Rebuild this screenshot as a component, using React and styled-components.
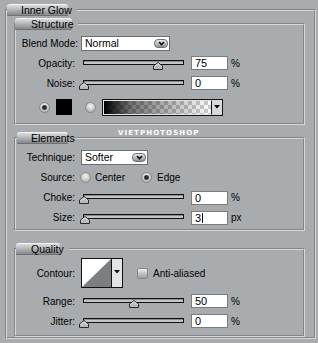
import React from 'react';
import styled, { createGlobalStyle, css } from 'styled-components';

const GlobalStyle = createGlobalStyle`
  html, body {
    margin: 0;
    padding: 0;
    background: #a9acaf;
  }
  body {
    font-family: "Liberation Sans", Arial, sans-serif;
    font-size: 10px;
    color: #000;
  }
`;

const Page = styled.div`
  position: relative;
  width: 318px;
  height: 343px;
  box-sizing: border-box;
  padding: 4px 2px 0 5px;
  overflow: hidden;
`;

// etched frame with a tab for its title
const Group = styled.fieldset`
  margin: ${p => (p.$inner ? `${p.$top}px 9px 0 7px` : '0')};
  padding: 0 0 ${p => p.$pb || 0}px 0;
  border: 2px groove #d6d8da;
  min-width: 0;
`;

const Legend = styled.legend`
  padding: 0 ${p => p.$gap}px 0 0;
  margin-left: ${p => p.$off || 0}px;
`;

const Tab = styled.div`
  width: ${p => p.$w}px;
  height: 12px;
  box-sizing: border-box;
  padding-left: ${p => p.$pad}px;
  line-height: 11px;
  white-space: nowrap;
  border-radius: 3px 3px 1px 1px;
  border-top: 1px solid #f2f3f4;
  border-bottom: 1px solid #6e7174;
  background: linear-gradient(#dadcdd 0%, #bfc1c3 35%, #9ea1a4 70%, #86898c 100%);
  font-size: 10.5px;
`;

const Body = styled.div`
  display: flex;
  flex-direction: column;
  padding-top: ${p => p.$pt || 0}px;
`;

const Row = styled.div`
  display: flex;
  align-items: center;
  height: ${p => p.$h || 20}px;
  padding-left: ${p => p.$pl || 0}px;
`;

const Label = styled.span`
  flex: none;
  width: ${p => p.$w || 59}px;
  margin-right: ${p => p.$mr || 6}px;
  text-align: right;
  white-space: nowrap;
`;

const Select = styled.div`
  display: flex;
  align-items: center;
  justify-content: space-between;
  width: ${p => p.$w}px;
  height: 15px;
  box-sizing: border-box;
  padding: 0 1px 0 3px;
  background: #fff;
  border: 1px solid #6c6f72;
  font-size: 10.5px;
`;

const DropBtn = styled.span`
  display: flex;
  align-items: center;
  justify-content: center;
  width: 14px;
  height: 9px;
  box-sizing: border-box;
  border: 1px solid #6f7275;
  border-radius: 4px;
  background: linear-gradient(#eceded, #b3b6b8 60%, #8e9194);
`;

const SliderBox = styled.div`
  position: relative;
  flex: none;
  width: 101px;
  height: 13px;
  margin: 0 7px 0 2px;
`;

const Track = styled.div`
  margin-top: 3px;
  height: 5px;
  box-sizing: border-box;
  border: 1px solid #111;
  background: #c3c5c7;
  box-shadow: inset 0 1px 0 #8a8c8e;
`;

const Thumb = styled.svg`
  position: absolute;
  top: 5px;
  margin-left: -5px;
`;

const NumBox = styled.div`
  flex: none;
  width: 37px;
  height: 14px;
  box-sizing: border-box;
  padding-left: 3px;
  line-height: 12px;
  background: #fff;
  border: 1px solid #7a7d80;
  font-size: 11px;
`;

const Caret = styled.span`
  display: inline-block;
  width: 1px;
  height: 10px;
  margin-left: 1px;
  vertical-align: -1px;
  background: #000;
`;

const Unit = styled.span`
  margin-left: 3px;
`;

const Radio = styled.span`
  flex: none;
  width: 11px;
  height: 11px;
  box-sizing: border-box;
  border-radius: 50%;
  border: 1px solid #878a8d;
  margin-right: ${p => p.$mr || 0}px;
  background: radial-gradient(circle at 50% 35%, #f4f4f4 0, #d3d5d6 40%, #9a9da0 100%);
  ${p =>
    p.$on &&
    css`
      background: radial-gradient(circle, #2b2b2b 0 1.6px, #6d6f71 2.4px, transparent 3px),
        radial-gradient(circle at 50% 35%, #f4f4f4 0, #d3d5d6 40%, #9a9da0 100%);
    `}
`;

const Swatch = styled.span`
  flex: none;
  width: 16px;
  height: 16px;
  margin: 0 13px 0 6px;
  background: #000;
`;

const GradBox = styled.div`
  display: flex;
  width: 121px;
  height: 17px;
  box-sizing: border-box;
  border: 1px solid #151515;
  background: #d7d9da;
`;

const GradFill = styled.div`
  flex: 1;
  border: 1px solid #e4e4e4;
  border-right-color: #151515;
  background:
    linear-gradient(90deg, #000 0%, rgba(0, 0, 0, 0.55) 25%, rgba(0, 0, 0, 0) 100%),
    conic-gradient(#cdcdcd 25%, #fff 0 50%, #cdcdcd 0 75%, #fff 0) 0 0 / 8px 8px;
`;

const GradArrow = styled.div`
  display: flex;
  align-items: center;
  justify-content: center;
  width: 10px;
`;

const Check = styled.span`
  flex: none;
  width: 11px;
  height: 11px;
  box-sizing: border-box;
  margin: 0 5px 0 14px;
  border: 1px solid #85888b;
  border-radius: 2px;
  background: linear-gradient(#f0f0f0, #c2c4c6 50%, #9c9fa2);
`;

const Watermark = styled.div`
  position: absolute;
  left: 118px;
  top: 129px;
  color: #fff;
  font-family: "DejaVu Sans", sans-serif;
  font-weight: bold;
  font-size: 7px;
  letter-spacing: 1.1px;
`;

const Chevron = () => (
  <svg width="7" height="5" viewBox="0 0 7 5">
    <polyline points="1,1 3.5,3.5 6,1" fill="none" stroke="#000" strokeWidth="1.6" />
  </svg>
);

const DownTri = () => (
  <svg width="6" height="4" viewBox="0 0 6 4">
    <polygon points="0,0 6,0 3,3.5" fill="#000" />
  </svg>
);

const Slider = ({ value, max = 100 }) => (
  <SliderBox>
    <Track />
    <Thumb width="10" height="8" viewBox="0 0 10 8" style={{ left: `${1 + (value / max) * 99}px` }}>
      <polygon points="5,0.5 9.5,4 9.5,7.5 0.5,7.5 0.5,4" fill="#b8bbbe" stroke="#2a2a2a" />
      <polyline points="1.5,4.5 5,1.8 8.5,4.5" fill="none" stroke="#e6e7e8" />
    </Thumb>
  </SliderBox>
);

const SliderRow = ({ label, value, max, unit = '%', caret, h }) => (
  <Row $h={h}>
    <Label>{label}</Label>
    <Slider value={value} max={max} />
    <NumBox>
      {value}
      {caret && <Caret />}
    </NumBox>
    <Unit>{unit}</Unit>
  </Row>
);

const Contour = () => (
  <svg width="42" height="30" viewBox="0 0 42 30">
    <rect x="0.5" y="0.5" width="41" height="29" fill="#fff" stroke="#111" />
    <polygon points="1,29 30,1 30,29" fill="#7c7f82" />
    <rect x="31" y="1" width="10" height="28" fill="#e3e4e5" />
    <line x1="30.5" y1="0" x2="30.5" y2="30" stroke="#111" />
    <polygon points="33,12 39,12 36,15.5" fill="#111" />
  </svg>
);

export default function App() {
  return (
    <>
      <GlobalStyle />
      <Page>
        <Group>
          <Legend $gap={9}>
            <Tab $w={61} $pad={14}>Inner Glow</Tab>
          </Legend>

          <Group $inner $top={2} $pb={2}>
            <Legend $gap={6} $off={-1}>
              <Tab $w={57} $pad={16}>Structure</Tab>
            </Legend>
            <Body $pt={3}>
              <Row>
                <Label $w={62} $mr={3}>Blend Mode:</Label>
                <Select $w={89}>
                  Normal
                  <DropBtn><Chevron /></DropBtn>
                </Select>
              </Row>
              <SliderRow label="Opacity:" value={75} />
              <SliderRow label="Noise:" value={0} />
              <Row $h={28} $pl={23}>
                <Radio $on />
                <Swatch />
                <Radio $mr={6} />
                <GradBox>
                  <GradFill />
                  <GradArrow><DownTri /></GradArrow>
                </GradBox>
              </Row>
            </Body>
          </Group>

          <Group $inner $top={7} $pb={1}>
            <Legend $gap={8} $off={1}>
              <Tab $w={51} $pad={14}>Elements</Tab>
            </Legend>
            <Body $pt={3}>
              <Row>
                <Label>Technique:</Label>
                <Select $w={67}>
                  Softer
                  <DropBtn><Chevron /></DropBtn>
                </Select>
              </Row>
              <Row $h={21}>
                <Label $mr={5}>Source:</Label>
                <Radio $mr={4} />
                <span>Center</span>
                <Radio $on $mr={5} style={{ marginLeft: 16 }} />
                <span>Edge</span>
              </Row>
              <SliderRow label="Choke:" value={0} h={19} />
              <SliderRow label="Size:" value={3} max={250} unit="px" caret h={21} />
            </Body>
          </Group>

          <Group $inner $top={12} $pb={4}>
            <Legend $gap={9}>
              <Tab $w={44} $pad={15}>Quality</Tab>
            </Legend>
            <Body>
              <Row $h={36}>
                <Label>Contour:</Label>
                <Contour />
                <Check />
                <span>Anti-aliased</span>
              </Row>
              <SliderRow label="Range:" value={50} />
              <SliderRow label="Jitter:" value={0} />
            </Body>
          </Group>
        </Group>
        <Watermark>VIETPHOTOSHOP</Watermark>
      </Page>
    </>
  );
}
